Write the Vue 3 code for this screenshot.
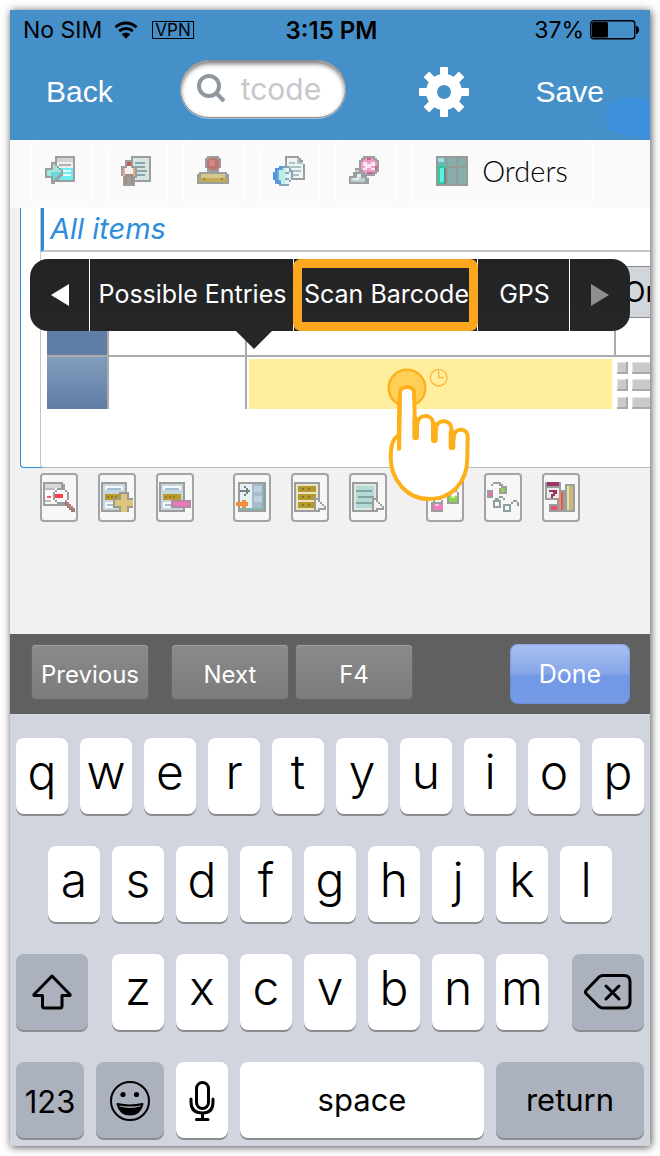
<!-- src/App.vue -->
<template>
  <div class="stage">
    <main class="phone">
      <div class="status">
        <div class="status-left">
          <span>No SIM</span>
          <svg class="wifi" viewBox="0 0 24 18" aria-hidden="true">
            <path
              d="M1.5 6.2a15 15 0 0 1 21 0M5.2 10.2a10 10 0 0 1 13.6 0"
              fill="none"
              stroke="#000"
              stroke-width="3"
            />
            <path d="M7.6 13.2a6.4 6.4 0 0 1 8.8 0L12 17.8z" />
          </svg>
          <span class="vpn">VPN</span>
        </div>
        <strong class="time">3:15 PM</strong>
        <div class="status-right">
          <span>37%</span>
          <svg class="battery" viewBox="0 0 50 20" aria-hidden="true">
            <rect x="0.8" y="0.8" width="44" height="18" rx="3" fill="none" stroke="#000" stroke-width="1.4" />
            <rect x="2" y="2" width="16" height="15.6" rx="1.5" />
            <path d="M46 6c4 0 4 8 0 8z" />
          </svg>
        </div>
      </div>

      <header class="nav">
        <button type="button" class="nav-btn">Back</button>
        <label class="search">
          <svg viewBox="0 0 30 30" aria-hidden="true">
            <circle cx="12" cy="12" r="10" />
            <path d="M18.5 18.5l8.5 8.5" />
          </svg>
          <input type="text" placeholder="tcode" aria-label="tcode" />
        </label>
        <button type="button" class="gear" aria-label="Settings">
          <svg viewBox="0 0 50 50">
            <g fill="#fff">
              <rect v-for="a in [0, 45, 90, 135]" :key="a" x="21" y="0" width="8" height="50" rx="1" :transform="`rotate(${a} 25 25)`" />
              <circle cx="25" cy="25" r="18" />
            </g>
            <circle cx="25" cy="25" r="7" fill="#4690ca" />
          </svg>
        </button>
        <button type="button" class="nav-btn save">Save</button>
        <svg class="smudge" viewBox="0 0 46 42" aria-hidden="true">
          <path d="M16 0H46V42H40L28 38L14 35L3 31V19L0 14L6 7Z" fill="#3d91dc" />
        </svg>
      </header>

      <div class="toolbar">
        <button v-for="name in tools" :key="name" type="button" class="tool" :aria-label="name">
          <svg class="px" viewBox="0 0 16 16">
            <path v-for="(p, i) in icons[name]" :key="i" :fill="p[0]" :d="p[1]" />
          </svg>
        </button>
        <button type="button" class="tool orders">
          <svg class="px" viewBox="0 0 16 16" aria-hidden="true">
            <path v-for="(p, i) in icons.orders" :key="i" :fill="p[0]" :d="p[1]" />
          </svg>
          <span>Orders</span>
        </button>
      </div>

      <section class="content">
        <div class="panel">
          <div class="items">
            <h2>All items</h2>
            <table>
              <thead>
                <tr>
                  <th class="c-sel"></th>
                  <th class="c-item"></th>
                  <th class="c-mat"></th>
                  <th class="c-qty">Or</th>
                </tr>
              </thead>
              <tbody>
                <tr class="first">
                  <td class="sel"></td>
                  <td></td>
                  <td></td>
                  <td class="last"></td>
                </tr>
                <tr class="second">
                  <td class="sel"></td>
                  <td></td>
                  <td class="entry"><input type="text" aria-label="Material" /></td>
                  <td class="last">
                    <svg class="grid" viewBox="0 0 34 50" aria-hidden="true">
                      <g v-for="y in [3, 20, 38]" :key="y">
                        <path :d="`M1 ${y}h11v12h-11zM16 ${y}h18v12h-18z`" fill="#aaa" />
                        <path :d="`M1 ${y}h9v10h-9zM16 ${y}h18v10h-18z`" fill="#e4e4e4" />
                        <path :d="`M2 ${y + 1}h8v9h-8zM17 ${y + 1}h17v9h-17z`" fill="#cacaca" />
                      </g>
                    </svg>
                  </td>
                </tr>
              </tbody>
            </table>
          </div>
        </div>

        <div class="actions">
          <div v-for="(group, g) in actions" :key="g" class="group">
            <button v-for="name in group" :key="name" type="button" class="action" :aria-label="name">
              <svg class="px" viewBox="0 0 16 16">
                <path v-for="(p, i) in icons[name]" :key="i" :fill="p[0]" :d="p[1]" />
              </svg>
            </button>
          </div>
        </div>

        <div class="menu" role="menu">
          <button type="button" role="menuitem" aria-label="Previous items">
            <svg class="tri" viewBox="0 0 18 22"><path d="M0 11L18 0V22Z" fill="#fff" /></svg>
          </button>
          <button type="button" role="menuitem" class="label">Possible Entries</button>
          <button type="button" role="menuitem" class="label marked">Scan Barcode</button>
          <button type="button" role="menuitem" class="label">GPS</button>
          <button type="button" role="menuitem" aria-label="More items">
            <svg class="tri" viewBox="0 0 18 22"><path d="M18 11L0 0V22Z" fill="#8e8e8f" /></svg>
          </button>
          <svg class="pointer" viewBox="0 0 36 18"><path d="M0 0H36L18 18Z" fill="#262627" /></svg>
        </div>

        <svg class="hand" viewBox="170 54 252 402" aria-hidden="true">
          <circle cx="230" cy="114" r="55" fill="#ffcf57" stroke="#fdb019" stroke-width="7" />
          <g stroke="#fdb019" stroke-linejoin="round" stroke-linecap="round">
            <path
              d="M209 128C209 105 251 105 251 128L255 263L262 216C268 192 305 192 308 218L312 272L318 229C325 208 360 208 363 234L365 293L372 252C380 233 412 235 412 260L411 325C411 400 360 447 296 447C230 447 181 390 181 320C181 288 188 265 205 256Z"
              fill="#fff"
              stroke-width="12"
            />
            <path d="M206 296L208 150" fill="none" stroke-width="13" />
            <path d="M256 261V210M312 269V225M365 290V250" fill="none" stroke-width="20" />
          </g>
          <g fill="none" stroke="#fdb53a" stroke-width="4">
            <circle cx="325" cy="83" r="25" />
            <path d="M325 62V83H341" />
          </g>
        </svg>
      </section>

      <div class="accessory">
        <button type="button" class="acc">Previous</button>
        <button type="button" class="acc next">Next</button>
        <button type="button" class="acc f4">F4</button>
        <button type="button" class="done">Done</button>
      </div>

      <div class="keyboard">
        <div class="row">
          <button v-for="k in 'qwertyuiop'" :key="k" type="button" class="key">{{ k }}</button>
        </div>
        <div class="row middle">
          <button v-for="k in 'asdfghjkl'" :key="k" type="button" class="key">{{ k }}</button>
        </div>
        <div class="row">
          <button type="button" class="key dark shift" aria-label="Shift">
            <svg width="40" height="36" viewBox="0 0 40 36">
              <path d="M20 2L38 20.500Q38.500 21.500 37.500 21.500H30V32Q30 34 28 34H12.500Q10.500 34 10.500 32V21.500H2.500Q1.500 21.500 2 20.500Z" />
            </svg>
          </button>
          <button v-for="k in 'zxcvbnm'" :key="k" type="button" class="key">{{ k }}</button>
          <button type="button" class="key dark delete" aria-label="Delete">
            <svg width="48" height="36" viewBox="0 0 48 36">
              <path d="M15 3Q17 1.500 19 1.500H40Q46 1.500 46 7.500V28Q46 34 40 34H19Q17 34 15 32.500L2 19.500Q1 18 2 16.500Z" />
              <path d="M22 12L35 25M35 12L22 25" />
            </svg>
          </button>
        </div>
        <div class="row">
          <button type="button" class="key dark mode">123</button>
          <button type="button" class="key dark mode" aria-label="Emoji">
            <svg width="42" height="42" viewBox="0 0 42 42">
              <circle cx="21" cy="21" r="19" stroke-width="2" />
              <circle cx="14" cy="14.500" r="2.600" class="solid" />
              <circle cx="27.500" cy="14.500" r="2.600" class="solid" />
              <path d="M8.500 24Q21 27 33.500 24Q31 34.500 21 34.500Q11 34.500 8.500 24Z" stroke-width="2" />
              <path d="M9.500 26Q21 30 32.500 26Q30 34.500 21 34.500Q12 34.500 9.500 26Z" class="solid" />
            </svg>
          </button>
          <button type="button" class="key mic" aria-label="Dictate">
            <svg width="26" height="42" viewBox="0 0 26 42">
              <rect x="7.500" y="2.500" width="12" height="26" rx="6" />
              <path d="M2 19V22Q2 33 13.500 33Q24 33 24 22V19M13.500 33V39M7.500 39.500H19" />
            </svg>
          </button>
          <button type="button" class="key space">space</button>
          <button type="button" class="key dark return">return</button>
        </div>
      </div>
    </main>
  </div>
</template>

<script setup>
const tools = ["execute", "vendor", "stamp", "web", "release"];

const actions = [
  ["details", "insert", "remove"],
  ["move", "select", "choose"],
  ["lock", "unlock", "chart"],
];

const G = "#9c9e9e";

// each icon is a stack of [fill, path] pairs on a 16 x 16 grid
const icons = {
  execute: [
    [G, "M5 0h10v13h-10z"],
    ["#d2d2d2", "M6 1h8v2h-8z"],
    ["#efefef", "M6 3h8v3h-8z"],
    ["#b0b0b0", "M7 4h6v1h-6z"],
    ["#6decf2", "M6 6h8v6h-8z"],
    ["#e6fbfc", "M8 7h5v1h-5zM9 9h4v1h-4z"],
    [G, "M3 3h2v1h1v1h1v1h1v1h1v3h-1v1h-1v1h-1v1h-1v1h-2v-3h-3v-5h3z"],
    ["#9fe6e2", "M4 4h1v1h1v1h1v1h1v2h-1v1h-1v1h-1v1h-1v-2h-3v-3h3z"],
    ["#69dcd8", "M3 8h5v1h-1v1h-1v1h-1v1h-1v-2h-1z"],
  ],
  vendor: [
    [G, "M5 0h10v13h-10z"],
    ["#d5e4e4", "M6 1h8v11h-8z"],
    ["#8ca4a6", "M7 3h5v1h-5zM7 5h5v1h-5zM7 7h6v1h-6zM7 9h5v1h-5z"],
    [G, "M2 2h4v3h2v6h-1v4h-6v-5h-1v-5h2z"],
    ["#c06058", "M3 3h2v2h-2z"],
    ["#e0b094", "M1 6h1v4h-1zM6 6h1v4h-1z"],
    ["#f2f2f0", "M3 5h2v1h1v3h-4v-3h1z"],
    ["#a08d7c", "M2 9h4v5h-1v-4h-2v4h-1z"],
  ],
  stamp: [
    [G, "M5 0h6v1h1v5h-1v2h4v1h1v5h-16v-5h1v-1h4v-2h-1v-5h1z"],
    ["#c0736f", "M6 1h4v1h1v4h-1v1h-4v-1h-1v-4h1z"],
    ["#cf8a86", "M6 2h3v3h-3z"],
    ["#d6c98a", "M2 9h12v2h-12z"],
    ["#c1ac56", "M1 11h14v2h-14z"],
    ["#8f8145", "M3 11h1v1h-1zM12 11h1v1h-1z"],
  ],
  web: [
    [G, "M6 0h7v1h1v1h1v2h1v8h-10z"],
    ["#eef3f3", "M7 1h5v3h3v7h-8z"],
    ["#abc4c7", "M8 3h3v1h-3zM8 5h6v1h-6zM8 7h6v1h-6zM8 9h5v1h-5zM12 1h1v2h2v1h-3z"],
    ["#8ba4b4", "M3 5h5v1h1v1h1v5h-1v1h-1v2h-5v-1h-2v-2h-1v-4h1v-2h2z"],
    ["#4d96e8", "M3 5h2v1h-1v1h-2v5h1v1h1v1h-2v-1h-1v-1h-1v-4h1v-2h2z"],
    ["#b2eff1", "M3 7h2v-1h1v8h-2v-2h-1z"],
    ["#e4f0ef", "M6 6h2v2h1v4h-1v2h-2z"],
    ["#8da6a8", "M6 8h2v1h-2zM6 11h2v1h-2z"],
  ],
  release: [
    [G, "M7 0h6v1h1v1h1v6h-1v1h-1v1h-4v1h1v3h-10v-4h2v-2h1v-2h2v-4h1v-1h1z"],
    ["#ec9dca", "M8 1h4v1h1v1h1v4h-1v1h-1v1h-4v-1h-1v-1h-1v-4h1v-1h1z"],
    ["#fbe7f1", "M7 3h2v1h2v-1h2v2h-2v1h2v1h-2v-1h-2v1h-2v-1h1v-1h-1z"],
    ["#cc5f9f", "M9 1h2v1h-2zM13 5h1v2h-1zM9 8h3v1h-3z"],
    ["#bfced1", "M1 11h7v2h-7zM3 7h2v1h-2z"],
    ["#e3edef", "M2 11h3v1h-3zM4 9h2v2h-2z"],
  ],
  orders: [
    ["#969b99", "M0 0h16v15h-16z"],
    ["#86aeab", "M6 1h4v4h-4zM11 1h4v4h-4zM6 6h4v8h-4zM11 6h4v8h-4z"],
    ["#68b9b4", "M1 1h4v4h-4z"],
    ["#a6dbe0", "M1 1h3v2h-3z"],
    ["#35c99a", "M1 5h4v9h-4z"],
    ["#5af0e4", "M2 6h2v7h-2z"],
    ["#628b86", "M4 6h1v8h-1z"],
  ],
  details: [
    [G, "M0 0h10v1h1v11h-11z"],
    ["#d8d8d8", "M1 1h8v2h-8z"],
    ["#fafafa", "M1 3h9v8h-9z"],
    ["#bdbdbd", "M1 3h5v1h-5zM1 9h3v1h-3z"],
    ["#f06063", "M2 7h2v1h-2z"],
    [G, "M7 3h4v1h1v1h1v4h-1v1h-1v1h-4v-1h-1v-1h-1v-4h1v-1h1z"],
    ["#f7f9fa", "M7 4h4v1h1v4h-1v1h-4v-1h-1v-4h1z"],
    ["#fb3f42", "M6 6h4v2h-4z"],
    ["#947c7a", "M11 10h2v1h1v1h1v1h1v2h-2v-1h-1v-1h-1v-1h-1z"],
    ["#c27c76", "M12 10h1v1h1v1h1v2h-1v-1h-1v-1h-1z"],
  ],
  insert: [
    [G, "M0 0h13v15h-13z"],
    ["#c8d6df", "M1 1h11v13h-11z"],
    ["#f4f8fb", "M2 2h9v2h-9zM2 10h8v3h-8z"],
    ["#a5bdd0", "M3 3h7v1h-7zM3 11h4v1h-4z"],
    ["#b99b2b", "M2 6h8v3h-8z"],
    ["#8f7c2b", "M3 7h1v1h-1zM5 7h1v1h-1zM7 7h1v1h-1z"],
    ["#9d9987", "M9 5h5v3h2v5h-2v2h-5v-2h-3v-5h3z"],
    ["#dcc67d", "M10 6h3v3h3v3h-3v3h-3v-3h-3v-3h3z"],
  ],
  remove: [
    [G, "M0 0h13v15h-13z"],
    ["#c8d6df", "M1 1h11v13h-11z"],
    ["#f4f8fb", "M2 2h9v2h-9zM2 10h8v3h-8z"],
    ["#a5bdd0", "M3 3h7v1h-7zM3 11h4v1h-4z"],
    ["#b99b2b", "M2 6h9v3h-9z"],
    ["#8f7c2b", "M3 7h1v1h-1zM5 7h1v1h-1zM7 7h1v1h-1z"],
    ["#b08aa0", "M6 9h10v4h-10z"],
    ["#ee75b8", "M7 10h8v2h-8z"],
  ],
  move: [
    [G, "M1 0h14v15h-14z"],
    ["#e7eff0", "M2 1h6v13h-6z"],
    ["#a7bccb", "M8 1h6v13h-6z"],
    ["#bdd0dc", "M9 2h4v3h-4zM9 7h4v3h-4z"],
    ["#83b4ae", "M13 1h1v13h-12v-1h11z"],
    ["#76817f", "M2 4h3v-1h-1v-1h1v1h1v1h1v1h-1v1h-1v1h-1v-1h1v-1h-3z"],
    ["#f08d3c", "M0 10h3v-1h2v1h1v2h-1v1h-2v-1h-3z"],
  ],
  select: [
    [G, "M0 0h13v15h-13z"],
    ["#eae4c4", "M1 1h11v13h-11z"],
    ["#b3982e", "M2 2h9v3h-9zM2 6h9v3h-9zM2 10h9v3h-9z"],
    ["#85732a", "M4 3h1v1h-1zM7 3h1v1h-1zM4 7h1v1h-1zM7 7h1v1h-1zM4 11h1v1h-1zM7 11h1v1h-1z"],
    [G, "M10 7h1v1h1v1h1v1h1v1h1v1h1v2h-3v1h-1v-1h-2z"],
    ["#f3f3f3", "M11 9h1v1h1v1h1v1h1v1h-3v1h-1z"],
  ],
  choose: [
    [G, "M0 0h13v15h-13z"],
    ["#dce6e3", "M1 1h11v13h-11z"],
    ["#b4dad6", "M2 2h9v11h-9z"],
    ["#7fa6a3", "M2 4h8v1h-8zM3 7h8v1h-8zM2 10h8v1h-8z"],
    [G, "M10 7h1v1h1v1h1v1h1v1h1v1h1v2h-3v1h-1v-1h-2z"],
    ["#f3f3f3", "M11 9h1v1h1v1h1v1h1v1h-3v1h-1z"],
  ],
  lock: [
    [G, "M1 10h1v-1h1v-1h3v1h1v6h-6zM10 5h1v-1h3v1h1v6h-6v-4h1z"],
    ["#f4f4f4", "M3 9h3v1h-3zM11 5h3v2h-3z"],
    ["#ec7fba", "M2 11h5v3h-5z"],
    ["#8bd94b", "M10 7h4v3h-4z"],
    ["#cef0a8", "M11 7h2v1h-2z"],
    ["#f9c3de", "M3 11h2v1h-2z"],
  ],
  unlock: [
    [G, "M0 4h2v-3h1v-1h4v1h1v1h2v4h-4v-3h1v-1h-1v-1h-3v1h-1v2h1v4h-4z"],
    ["#dc77ae", "M1 5h2v2h-2z"],
    ["#8fd154", "M7 3h2v2h-2z"],
    ["#8ca09f", "M5 8h1v-1h2v1h1v1h-1v-1h-2v1h1v4h-4v-4h1v-1zM8 11h4v-1h1v-1h2v1h1v2h-1v-2h-2v1h-1v4h-4z"],
    ["#f4f8f7", "M4 10h2v2h-2zM9 12h2v2h-2z"],
  ],
  chart: [
    [G, "M0 0h8v9h-8zM10 1h5v14h-13v-4h4v-7h4z"],
    ["#ececec", "M1 3h6v5h-6z"],
    ["#9b3763", "M1 0h6v2h-6zM2 4h4v2h-1v1h-1v1h-1v-2h1v-1h-2z"],
    ["#c76857", "M7 5h2v9h-2z"],
    ["#e88a70", "M7 5h1v9h-1z"],
    ["#c9b878", "M11 2h3v12h-3z"],
    ["#eadfae", "M11 2h1v12h-1z"],
    ["#e5536f", "M3 12h3v2h-3z"],
  ],
};
</script>

<style>
body {
  background: #fff;
}
</style>

<style scoped>
* {
  box-sizing: border-box;
}
button,
input {
  font: inherit;
  color: inherit;
  border: 0;
  margin: 0;
  padding: 0;
  background: none;
  outline: none;
}
svg {
  display: block;
  flex: none;
}
.stage {
  padding: 10px;
  font-family: Inter, "Liberation Sans", sans-serif;
}
.phone {
  background: #f1f1f1;
  box-shadow: 1px 1px 8px rgba(0, 0, 0, 0.7);
}

/* status bar */
.status {
  display: grid;
  grid-template-columns: 1fr auto 1fr;
  align-items: center;
  height: 40px;
  padding: 0 10px 0 13px;
  background: #4690ca;
  color: #000;
  font-size: 23px;
}
.status-left,
.status-right {
  display: flex;
  align-items: center;
}
.status-right {
  justify-content: flex-end;
  gap: 6px;
}
.wifi {
  width: 24px;
  height: 18px;
  margin: 0 14px 0 12px;
}
.vpn {
  border: 1px solid #000;
  padding: 0 2px;
  font-size: 17px;
  line-height: 16px;
}
.time {
  font-size: 24px;
  font-weight: 600;
}
.battery {
  width: 50px;
  height: 20px;
}

/* navigation bar */
.nav {
  position: relative;
  display: flex;
  align-items: center;
  height: 90px;
  padding: 0 46px 6px 36px;
  background: #4690ca;
  color: #fff;
}
.nav-btn {
  font-family: "Liberation Sans", Arial, sans-serif;
  font-size: 30px;
}
.save {
  margin-left: auto;
  z-index: 1;
}
.search {
  display: flex;
  align-items: center;
  gap: 14px;
  width: 166px;
  height: 58px;
  margin: 0 0 6px 67px;
  padding: 0 16px;
  border: 1px solid #8f8c8a;
  border-radius: 29px;
  background: #fff;
  box-shadow: inset 0 3px 4px rgba(0, 0, 0, 0.5), 0 1px 0 #9cc4e6;
}
.search svg {
  width: 30px;
  height: 30px;
  fill: none;
  stroke: #8e979e;
  stroke-width: 4;
}
.search input {
  width: 100%;
  min-width: 0;
  font-size: 30px;
}
.search input::placeholder {
  color: #c7c7cd;
  opacity: 1;
}
.gear {
  width: 50px;
  height: 50px;
  margin-left: 73px;
}
.smudge {
  position: absolute;
  right: 0;
  bottom: 0;
  width: 46px;
  height: 42px;
}

/* icon toolbar */
.toolbar {
  display: flex;
  gap: 14px;
  height: 68px;
  padding: 1px 20px 5px;
  background: #fafafa;
}
.tool {
  display: flex;
  align-items: center;
  justify-content: center;
  width: 62px;
  border: 2px solid #fdfdfd;
  border-radius: 4px;
}
.px {
  width: 32px;
  height: 32px;
  shape-rendering: crispEdges;
}
.orders {
  gap: 14px;
  width: 184px;
  font-family: Lato, sans-serif;
  font-size: 29px;
  font-weight: 300;
}
.orders span {
  padding-bottom: 4px;
}

/* content */
.content {
  position: relative;
  height: 426px;
  padding-left: 10px;
}
.panel {
  padding-left: 19px;
  border: solid #2b8ddb;
  border-width: 0 0 1px 1px;
  border-bottom-left-radius: 4px;
  background: #fff;
}
.items {
  padding-bottom: 58px;
  border-left: 1px solid #c6c6c6;
  box-shadow: 0 1px 0 #b4bcc2;
  border-bottom-left-radius: 4px;
  overflow: hidden;
}
h2 {
  height: 44px;
  margin: 0;
  padding-left: 6px;
  border-left: 3px solid #2b8ddb;
  border-bottom: 2px solid #c6c6c6;
  color: #2b8ddb;
  font-size: 29px;
  font-style: italic;
  font-weight: 400;
  line-height: 42px;
}
table {
  width: 100%;
  margin-top: 14px;
  padding-left: 6px;
  border-spacing: 0;
  table-layout: fixed;
}
th,
td {
  padding: 0;
}
th {
  height: 52px;
  font-weight: 400;
}
.c-sel {
  width: 62px;
}
.c-item {
  width: 138px;
}
.c-qty {
  width: 34px;
  padding-left: 8px;
  border: solid #8a8a8a;
  border-width: 1px 0;
  background: #d0d6dc;
  font-size: 28px;
  text-align: left;
  overflow: hidden;
}
td {
  border-right: 2px solid #ababab;
}
td.last {
  border-right: 0;
}
.first td {
  height: 39px;
  border-bottom: 2px solid #ababab;
}
.second td {
  height: 52px;
}
.first .sel {
  background: #607da6;
}
.second .sel {
  background: linear-gradient(#839cbd, #607da6);
}
.second .entry {
  padding: 2px 2px 0;
  border-right-color: #fff;
}
.entry input {
  display: block;
  width: 100%;
  height: 50px;
  background: #ffee9d;
}
.second .last {
  padding-top: 2px;
}
.grid {
  width: 34px;
  height: 50px;
}

.actions {
  display: flex;
  gap: 39px;
  padding: 5px 0 0 20px;
}
.group {
  display: flex;
  gap: 20px;
}
.action {
  display: flex;
  align-items: center;
  justify-content: center;
  width: 38px;
  height: 49px;
  border: 2px solid #a4a4a4;
  border-radius: 4px;
  background: #f7f7f7;
}

/* edit menu */
.menu {
  position: absolute;
  top: 51px;
  left: 20px;
  right: 20px;
  display: grid;
  grid-template-columns: 60fr 204fr 184fr 92fr 60fr;
  height: 72px;
  border-radius: 18px;
  background: linear-gradient(#222325, #262627);
  color: #fff;
  font-size: 25px;
}
.menu button {
  display: flex;
  align-items: center;
  justify-content: center;
  min-width: 0;
  border-right: 1px solid #fff;
  white-space: nowrap;
}
.menu .label {
  padding: 0 0 2px 2px;
}
.menu button:last-of-type {
  border-right: 0;
}
.menu .marked {
  position: relative;
}
.marked::after {
  content: "";
  position: absolute;
  inset: 0 -1px 0 -1px;
  border: 9px solid #faa61e;
  border-radius: 8px;
}
.tri {
  width: 18px;
  height: 22px;
}
.pointer {
  position: absolute;
  top: 72px;
  left: 206px;
  width: 36px;
  height: 18px;
}
.hand {
  position: absolute;
  top: 160px;
  left: 377px;
  width: 84px;
  height: 134px;
}

/* keyboard accessory */
.accessory {
  display: flex;
  height: 80px;
  padding: 10px 20px 10px 22px;
  background: #606060;
  color: #fff;
  font-size: 24px;
}
.acc {
  width: 116px;
  height: 54px;
  margin-top: 1px;
  padding-top: 5px;
  border-radius: 4px;
  background: linear-gradient(#8a8a8a, #7b7b7b);
  box-shadow: inset 0 1px 1px #a0a0a0, 0 0 2px #777;
}
.next {
  margin-left: 24px;
}
.f4 {
  margin-left: 8px;
}
.done {
  width: 120px;
  height: 60px;
  margin-left: auto;
  border-radius: 8px;
  background: linear-gradient(#a9c0f3, #86a6e8 50%, #7199e6 52%, #769be6);
  box-shadow: inset 0 0 2px #5573b8;
  font-size: 25px;
}

/* keyboard */
.keyboard {
  display: grid;
  gap: 32px;
  padding: 24px 6px 8px;
  background: #d1d5dd;
  color: #000;
}
.row {
  display: flex;
  gap: 12px;
}
.middle {
  padding: 0 32px;
}
.key {
  display: flex;
  flex: 1;
  align-items: center;
  justify-content: center;
  height: 76px;
  padding-bottom: 10px;
  border-radius: 8px;
  background: #fff;
  box-shadow: 0 2px 0 #888b90;
  font-size: 48px;
  font-weight: 300;
}
.key svg {
  fill: none;
  stroke: #000;
  stroke-width: 3;
  stroke-linecap: round;
  stroke-linejoin: round;
}
.key .solid {
  fill: #000;
  stroke: none;
}
.dark {
  background: #abb2be;
}
.shift,
.delete {
  flex: 0 0 72px;
  padding: 0;
}
.shift {
  margin-right: 12px;
}
.delete {
  margin-left: 12px;
}
.mode {
  flex: 0 0 68px;
  padding: 2px 0 0;
  font-size: 31px;
  font-weight: 400;
}
.mic {
  flex: 0 0 52px;
  padding: 2px 0 0;
}
.space,
.return {
  padding-bottom: 2px;
  font-size: 31px;
  font-weight: 400;
}
.return {
  flex: 0 0 148px;
}
</style>
